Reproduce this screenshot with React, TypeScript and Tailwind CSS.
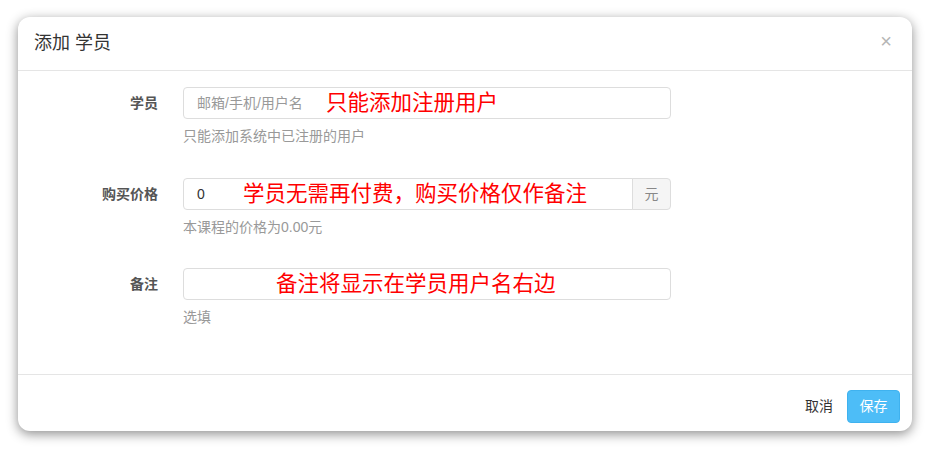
import React from 'react';

const cjk = { fontFamily: '"Liberation Sans", "Noto Sans CJK SC", sans-serif' };

export default function App() {
  return (
    <div className="w-[930px] h-[449px] bg-white pt-[17px] pl-[18px]" style={cjk}>
      <div className="w-[894px] h-[414px] bg-white rounded-[12px] shadow-[0_3px_12px_rgba(0,0,0,0.45)] flex flex-col">
        {/* Header */}
        <div className="h-[54px] flex items-center justify-between pl-4 pr-5 border-b border-[#e5e5e5]">
          <h4 className="text-[18px] text-[#333]">添加 学员</h4>
          <span className="text-[20px] leading-none text-[#b5b5b5] -mt-1.5">×</span>
        </div>

        {/* Body */}
        <div className="flex-1 pt-4">
          {/* 学员 */}
          <div className="flex items-start mb-[31px]">
            <label className="w-[140px] h-8 flex items-center justify-end text-[14px] font-semibold text-[#555]">学员</label>
            <div className="ml-[25px] w-[488px]">
              <div className="relative h-8 border border-[#ddd] rounded flex items-center px-[13px]">
                <span className="text-[14px] text-[#999]">邮箱/手机/用户名</span>
                <span className="absolute left-[142px] top-1/2 -translate-y-1/2 text-[21.5px] text-[#ff0000] whitespace-nowrap">只能添加注册用户</span>
              </div>
              <p className="mt-[6px] text-[14px] leading-[22px] text-[#999]">只能添加系统中已注册的用户</p>
            </div>
          </div>

          {/* 购买价格 */}
          <div className="flex items-start mb-[30px]">
            <label className="w-[140px] h-8 flex items-center justify-end text-[14px] font-semibold text-[#555]">购买价格</label>
            <div className="ml-[25px] w-[488px]">
              <div className="flex h-8">
                <div className="relative flex-1 border border-[#ddd] rounded-l flex items-center px-[13px]">
                  <span className="text-[14px] text-[#333]">0</span>
                  <span className="absolute left-[59px] top-1/2 -translate-y-1/2 text-[21.5px] text-[#ff0000] whitespace-nowrap">学员无需再付费，购买价格仅作备注</span>
                </div>
                <div className="w-[39px] -ml-px border border-[#ddd] rounded-r bg-[#f5f5f5] flex items-center justify-center text-[14px] text-[#888]">元</div>
              </div>
              <p className="mt-[6px] text-[14px] leading-[22px] text-[#999]">本课程的价格为0.00元</p>
            </div>
          </div>

          {/* 备注 */}
          <div className="flex items-start">
            <label className="w-[140px] h-8 flex items-center justify-end text-[14px] font-semibold text-[#555]">备注</label>
            <div className="ml-[25px] w-[488px]">
              <div className="relative h-8 border border-[#ddd] rounded">
                <span className="absolute left-[92px] top-1/2 -translate-y-1/2 text-[21.5px] text-[#ff0000] whitespace-nowrap">备注将显示在学员用户名右边</span>
              </div>
              <p className="mt-[6px] text-[14px] leading-[22px] text-[#999]">选填</p>
            </div>
          </div>
        </div>

        {/* Footer */}
        <div className="border-t border-[#e5e5e5] pt-[15px] pb-2 pr-3 flex items-center justify-end gap-[14px]">
          <button className="text-[14px] text-[#333]">取消</button>
          <button className="w-[53px] h-[33px] rounded bg-[#4dbdf7] border border-[#3fb2ef] text-[14px] text-white">保存</button>
        </div>
      </div>
    </div>
  );
}
